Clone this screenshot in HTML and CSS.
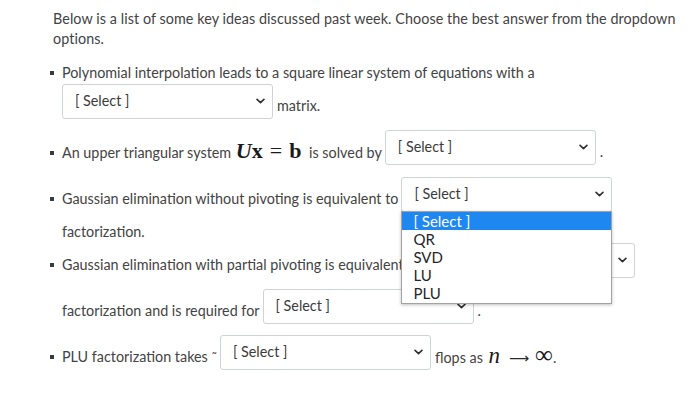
FILE: index.html
```html
<!DOCTYPE html>
<html lang="en">
<head>
<meta charset="utf-8">
<title>Key ideas</title>
<link rel="stylesheet" href="styles.css">
</head>
<body>
<div class="page">
  <p class="intro">Below is a list of some key ideas discussed past week. Choose the best answer from the dropdown options.</p>
  <ul class="ideas">
    <li class="item item-1">
      <div class="text-line"><span class="txt bullet">Polynomial interpolation leads to a square linear system of equations with a</span></div>
      <div class="row row-follow">
        <span class="select"><span class="select-label">[ Select ]</span><svg class="chev" viewBox="0 0 10 6"><path d="M1.2 1.2 L5 4.8 L8.8 1.2"/></svg></span>
        <span class="txt after">matrix.</span>
      </div>
    </li>
    <li class="item item-2">
      <div class="row">
        <span class="txt bullet">An upper triangular system <span class="math math-eq"><i class="mi">U</i><b class="mb">x</b><span class="mo">=</span><b class="mb">b</b></span> is solved by</span>
        <span class="select"><span class="select-label">[ Select ]</span><svg class="chev" viewBox="0 0 10 6"><path d="M1.2 1.2 L5 4.8 L8.8 1.2"/></svg></span>
        <span class="txt after">.</span>
      </div>
    </li>
    <li class="item item-3">
      <div class="row">
        <span class="txt bullet">Gaussian elimination without pivoting is equivalent to</span>
        <span class="select select-open"><span class="select-label">[ Select ]</span><svg class="chev" viewBox="0 0 10 6"><path d="M1.2 1.2 L5 4.8 L8.8 1.2"/></svg>
          <span class="menu">
            <span class="option option-active">[ Select ]</span>
            <span class="option">QR</span>
            <span class="option">SVD</span>
            <span class="option">LU</span>
            <span class="option">PLU</span>
          </span>
        </span>
      </div>
      <div class="text-line line-gap"><span class="txt">factorization.</span></div>
    </li>
    <li class="item item-4">
      <div class="row row-follow">
        <span class="txt bullet">Gaussian elimination with partial pivoting is equivalent to</span>
        <span class="select"><span class="select-label">[ Select ]</span><svg class="chev" viewBox="0 0 10 6"><path d="M1.2 1.2 L5 4.8 L8.8 1.2"/></svg></span>
      </div>
      <div class="row row-next">
        <span class="txt">factorization and is required for</span>
        <span class="select"><span class="select-label">[ Select ]</span><svg class="chev" viewBox="0 0 10 6"><path d="M1.2 1.2 L5 4.8 L8.8 1.2"/></svg></span>
        <span class="txt after">.</span>
      </div>
    </li>
    <li class="item item-5">
      <div class="row">
        <span class="txt bullet">PLU factorization takes<span class="tilde">&#732;</span></span>
        <span class="select"><span class="select-label">[ Select ]</span><svg class="chev" viewBox="0 0 10 6"><path d="M1.2 1.2 L5 4.8 L8.8 1.2"/></svg></span>
        <span class="txt after">flops as <span class="math"><i class="mi mi-n">n</i><span class="arrow">&#10230;</span><span class="inf">&infin;</span></span>.</span>
      </div>
    </li>
  </ul>
</div>
</body>
</html>
```

FILE: styles.css
```css
html, body {
  margin: 0;
  padding: 0;
  background: #ffffff;
}

body {
  font-family: "Lato", "Open Sans", "Liberation Sans", sans-serif;
  font-size: 14.35px;
  color: #434343;
}

.page {
  padding: 9px 10px 0 53px;
}

.intro {
  margin: 0;
  line-height: 20px;
  letter-spacing: 0.07px;
}

.ideas {
  list-style: none;
  margin: 14px 0 0 0;
  padding: 0 0 0 9px;
}

.item-2 { margin-top: 11px; }
.item-3 { margin-top: 12px; }
.item-4 { margin-top: 1px; }
.item-5 { margin-top: 11px; }

.text-line {
  line-height: 20px;
  height: 20px;
}

.line-gap { margin-top: 10px; }

.row {
  display: flex;
  align-items: center;
  height: 35px;
}

.row-follow { margin-top: 1px; }
.row-next { margin-top: 11px; }

.txt {
  line-height: 20px;
  white-space: nowrap;
}

.row .txt {
  margin-top: 8px;
}

.bullet::before {
  content: "";
  display: inline-block;
  width: 4px;
  height: 4px;
  background: #3b3b3b;
  margin-left: -12px;
  margin-right: 8px;
  vertical-align: 3px;
}

.tilde {
  font-size: 13px;
  margin-left: 4px;
}

.after {
  margin-left: 4px;
}

.select {
  position: relative;
  display: flex;
  align-items: center;
  justify-content: space-between;
  box-sizing: border-box;
  width: 211px;
  height: 35px;
  margin-left: 3px;
  padding: 0 7px 0 12px;
  border: 1px solid #cfd3d6;
  border-radius: 3px;
  background: #ffffff;
  color: #3b3b3b;
  flex: none;
}

.item-1 .select {
  margin-left: 0;
}

.select-label {
  line-height: 20px;
  margin-top: -2px;
}

.chev {
  width: 9px;
  height: 6px;
  fill: none;
  stroke: #2f2f2f;
  stroke-width: 1.8;
  stroke-linecap: round;
  stroke-linejoin: round;
  margin-top: -2px;
}

.select-open {
  z-index: 2;
}

.menu {
  position: absolute;
  left: -1px;
  top: 33px;
  width: 211px;
  box-sizing: border-box;
  display: flex;
  flex-direction: column;
  background: #ffffff;
  border: 1px solid #a3a3a3;
  box-shadow: 0 1px 3px rgba(0, 0, 0, 0.25);
  padding: 0 0 1px 0;
  z-index: 3;
}

.option {
  height: 18px;
  line-height: 18px;
  padding-left: 11px;
  font-size: 15px;
  color: #262626;
}

.option-active {
  background: #1e88f0;
  color: #ffffff;
}

.math {
  font-family: "Liberation Serif", "DejaVu Serif", serif;
  font-size: 22px;
  color: #1a1a1a;
  white-space: nowrap;
  line-height: 20px;
}

.math-eq {
  margin: 0 4px 0 1px;
}

.mi {
  font-style: italic;
  font-weight: 700;
}

.mb {
  font-weight: 700;
}

.mo {
  margin: 0 7px;
}

.mi-n {
  font-weight: 400;
  font-size: 23px;
  margin-left: 2px;
}

.arrow {
  font-family: "DejaVu Sans", sans-serif;
  font-size: 14px;
  margin: 0 6px 0 9px;
  color: #2a2a2a;
}

.inf {
  font-family: "Liberation Serif", serif;
  font-size: 25px;
}
```
